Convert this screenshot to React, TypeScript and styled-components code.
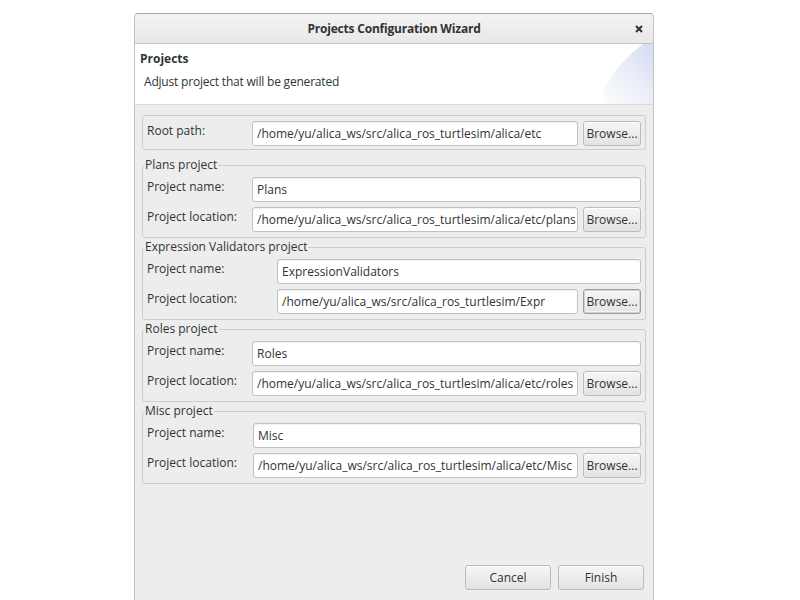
import React from 'react';
import styled, { createGlobalStyle } from 'styled-components';

const GlobalStyle = createGlobalStyle`
  html, body {
    margin: 0;
    padding: 0;
    background: #ffffff;
    overflow: hidden;
  }
  body {
    font-family: "Open Sans", "DejaVu Sans", sans-serif;
    font-size: 12px;
    color: #2e3436;
  }
`

const Page = styled.div`
  padding: 13px 0 0 134px;
`

const Dialog = styled.div`
  width: 520px;
  height: 600px;
  box-sizing: border-box;
  border: 1px solid #c4c4c4;
  border-top-color: #a8a8a8;
  border-radius: 4px 4px 0 0;
  background: #ededed;
  display: flex;
  flex-direction: column;
  overflow: hidden;
`

const TitleBar = styled.div`
  height: 29px;
  border-bottom: 1px solid #c2c2c2;
  background: linear-gradient(#f3f3f3, #e8e8e8);
  display: flex;
  align-items: center;
  justify-content: center;
  position: relative;
  font-weight: 700;
  font-size: 12px;
  letter-spacing: -0.2px;
`

const CloseButton = styled.button`
  position: absolute;
  right: 8px;
  top: 9px;
  width: 12px;
  height: 12px;
  padding: 0;
  border: none;
  background: transparent;
  display: flex;
  align-items: center;
  justify-content: center;
`

const Header = styled.div`
  height: 60px;
  background: #ffffff;
  border-bottom: 1px solid #dadada;
  display: flex;
`

const HeaderText = styled.div`
  flex: 1;
  padding: 7px 0 0 5px;
`

const HeaderTitle = styled.div`
  font-weight: 700;
  line-height: 16px;
`

const HeaderDesc = styled.div`
  margin: 7px 0 0 4px;
  line-height: 16px;
  letter-spacing: -0.2px;
`

const Body = styled.div`
  flex: 1;
  display: flex;
  flex-direction: column;
  padding: 10px 7px 0 7px;
`

const Group = styled.fieldset<{ $plain?: boolean }>`
  margin: 0 0 1px 0;
  padding: ${p => (p.$plain ? '5px 4px 3px' : '4px 4px 5px')};
  border: 1px solid #cdcdcd;
  border-radius: 3px;
  display: flex;
  flex-direction: column;
  gap: 5px;
  min-width: 0;
`

const Legend = styled.legend`
  padding: 0 1px;
  margin-left: -3px;
  line-height: 16px;
  font-size: 12px;
`

const Spacer = styled.div<{ $h: number }>`
  height: ${p => p.$h}px;
  flex-shrink: 0;
`

const Row = styled.div`
  display: flex;
  height: 25px;
`

const Label = styled.div<{ $w: number }>`
  width: ${p => p.$w}px;
  flex-shrink: 0;
  line-height: 20px;
  white-space: nowrap;
`

const TextField = styled.div`
  flex: 1;
  min-width: 0;
  box-sizing: border-box;
  height: 25px;
  background: #ffffff;
  border: 1px solid #bfc2c2;
  border-radius: 3px;
  box-shadow: inset 0 1px 1px rgba(0, 0, 0, 0.06);
  padding: 0 4px;
  display: flex;
  align-items: center;
  white-space: nowrap;
  overflow: hidden;
  color: #2e3436;
`

const Button = styled.button<{ $w: number; $focus?: boolean }>`
  width: ${p => p.$w}px;
  height: 25px;
  flex-shrink: 0;
  box-sizing: border-box;
  border: 1px solid ${p => (p.$focus ? '#9b9d9d' : '#b9bcbc')};
  border-radius: 3px;
  background: linear-gradient(#f6f6f6, #e3e3e3);
  box-shadow: ${p =>
    p.$focus ? 'inset 0 0 0 1px #d2d2d2, inset 0 0 0 2px #f4f4f4' : 'inset 0 1px 0 #ffffff'};
  font-family: "Open Sans", "DejaVu Sans", sans-serif;
  font-size: 12px;
  color: #2e3436;
  padding: 0;
`

const BrowseButton = styled(Button)`
  margin-left: 5px;
`

const Footer = styled.div`
  margin-top: auto;
  display: flex;
  justify-content: flex-end;
  gap: 7px;
  padding: 0 2px 22px 0;
`

type Project = {
  legend: string;
  name: string;
  location: string;
  labelW: number;
  focus?: boolean;
};

const projects: Project[] = [
  { legend: 'Plans project', name: 'Plans', location: '/home/yu/alica_ws/src/alica_ros_turtlesim/alica/etc/plans', labelW: 105 },
  { legend: 'Expression Validators project', name: 'ExpressionValidators', location: '/home/yu/alica_ws/src/alica_ros_turtlesim/Expr', labelW: 130, focus: true },
  { legend: 'Roles project', name: 'Roles', location: '/home/yu/alica_ws/src/alica_ros_turtlesim/alica/etc/roles', labelW: 105 },
  { legend: 'Misc project', name: 'Misc', location: '/home/yu/alica_ws/src/alica_ros_turtlesim/alica/etc/Misc', labelW: 106 },
];

function Banner() {
  return (
    <svg width="58" height="60" viewBox="0 0 58 60">
      <defs>
        <linearGradient id="sw" x1="0" y1="1" x2="1" y2="0">
          <stop offset="0" stopColor="#ffffff" />
          <stop offset="0.55" stopColor="#e9edf8" />
          <stop offset="1" stopColor="#d3dcf2" />
        </linearGradient>
      </defs>
      <path d="M48 0 C 30 14, 12 32, 4 60 L 58 60 L 58 0 Z" fill="url(#sw)" />
    </svg>
  );
}

function App() {
  return (
    <Page>
      <GlobalStyle />
      <Dialog>
        <TitleBar>
          Projects Configuration Wizard
          <CloseButton>
            <svg width="8" height="8" viewBox="0 0 8 8">
              <path d="M1 1 L7 7 M7 1 L1 7" stroke="#2e3436" strokeWidth="2" />
            </svg>
          </CloseButton>
        </TitleBar>
        <Header>
          <HeaderText>
            <HeaderTitle>Projects</HeaderTitle>
            <HeaderDesc>Adjust project that will be generated</HeaderDesc>
          </HeaderText>
          <Banner />
        </Header>
        <Body>
          <Group $plain>
            <Row>
              <Label $w={105}>Root path:</Label>
              <TextField>/home/yu/alica_ws/src/alica_ros_turtlesim/alica/etc</TextField>
              <BrowseButton $w={58}>Browse...</BrowseButton>
            </Row>
          </Group>
          <Spacer $h={6} />
          {projects.map(p => (
            <Group key={p.legend}>
              <Legend>{p.legend}</Legend>
              <Row>
                <Label $w={p.labelW}>Project name:</Label>
                <TextField>{p.name}</TextField>
              </Row>
              <Row>
                <Label $w={p.labelW}>Project location:</Label>
                <TextField>{p.location}</TextField>
                <BrowseButton $w={58} $focus={p.focus}>Browse...</BrowseButton>
              </Row>
            </Group>
          ))}
          <Footer>
            <Button $w={86}>Cancel</Button>
            <Button $w={86}>Finish</Button>
          </Footer>
        </Body>
      </Dialog>
    </Page>
  );
}

export default App;
